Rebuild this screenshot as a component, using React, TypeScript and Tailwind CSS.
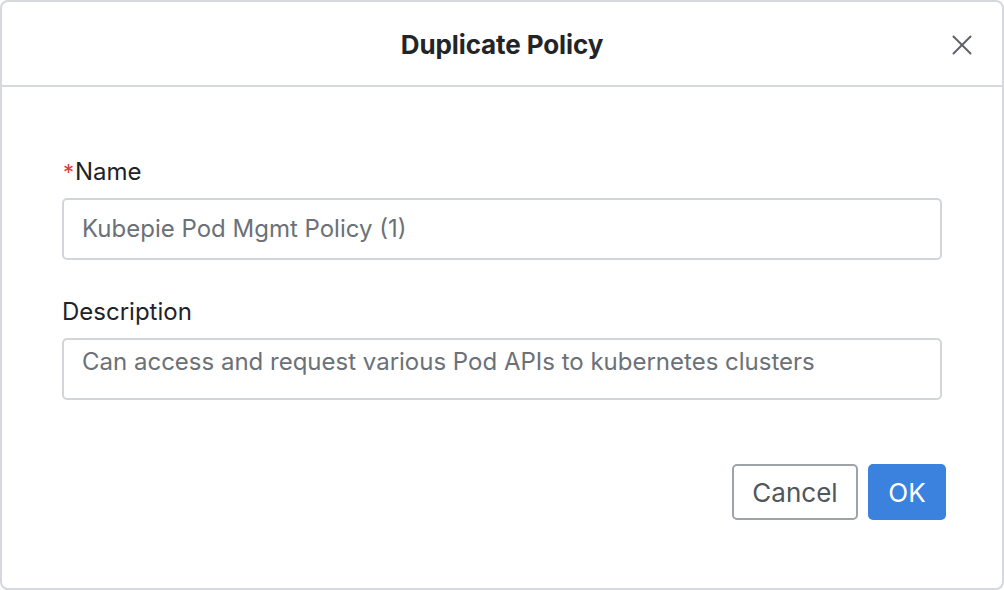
export default function App() {
  return (
    <div className="w-[1004px] h-[590px] bg-white" style={{ fontFamily: 'Inter, "Noto Sans", sans-serif' }}>
      <div className="w-full h-full border-2 border-[#d5d8dc] rounded-[8px] flex flex-col">
        {/* Header */}
        <div className="relative h-[85px] shrink-0 border-b-2 border-[#d5d8dc] flex items-center justify-center">
          <h1 className="text-[26px] leading-[32px] font-bold text-[#222427] tracking-[-0.1px] mt-[3px]">Duplicate Policy</h1>
          <button className="absolute right-[30px] top-[33px] w-[20px] h-[20px] flex items-center justify-center">
            <svg width="20" height="20" viewBox="0 0 20 20" fill="none" stroke="#5f6368" strokeWidth="2" strokeLinecap="round">
              <line x1="1.5" y1="1.5" x2="18.5" y2="18.5" />
              <line x1="18.5" y1="1.5" x2="1.5" y2="18.5" />
            </svg>
          </button>
        </div>

        {/* Body */}
        <div className="flex flex-col pt-[71px] pl-[60px] pr-[60px]">
          <label className="text-[24px] leading-[28px] text-[#1f2328] mb-[12px] flex">
            <span className="text-[#e5383b] text-[22px] pl-[1px] pr-[1px]">*</span>Name
          </label>
          <div className="h-[62px] border-2 border-[#d2d5d9] rounded-[5px] flex items-center px-[18px] text-[24px] text-[#6b7177]">
            Kubepie Pod Mgmt Policy (1)
          </div>

          <label className="text-[24px] leading-[28px] text-[#1f2328] mt-[38px] mb-[12px]">Description</label>
          <div className="h-[62px] border-2 border-[#d2d5d9] rounded-[5px] px-[18px] pt-[8px] text-[24px] leading-[28px] text-[#6b7177]">
            Can access and request various Pod APIs to kubernetes clusters
          </div>

          <div className="flex justify-end gap-[10px] mt-[64px] mr-[-4px]">
            <button className="w-[126px] h-[56px] border-2 border-[#9ea3a8] rounded-[5px] text-[26px] text-[#50565c] bg-white">
              Cancel
            </button>
            <button className="w-[78px] h-[56px] rounded-[5px] text-[26px] text-white bg-[#3b82de]">
              OK
            </button>
          </div>
        </div>
      </div>
    </div>
  );
}
